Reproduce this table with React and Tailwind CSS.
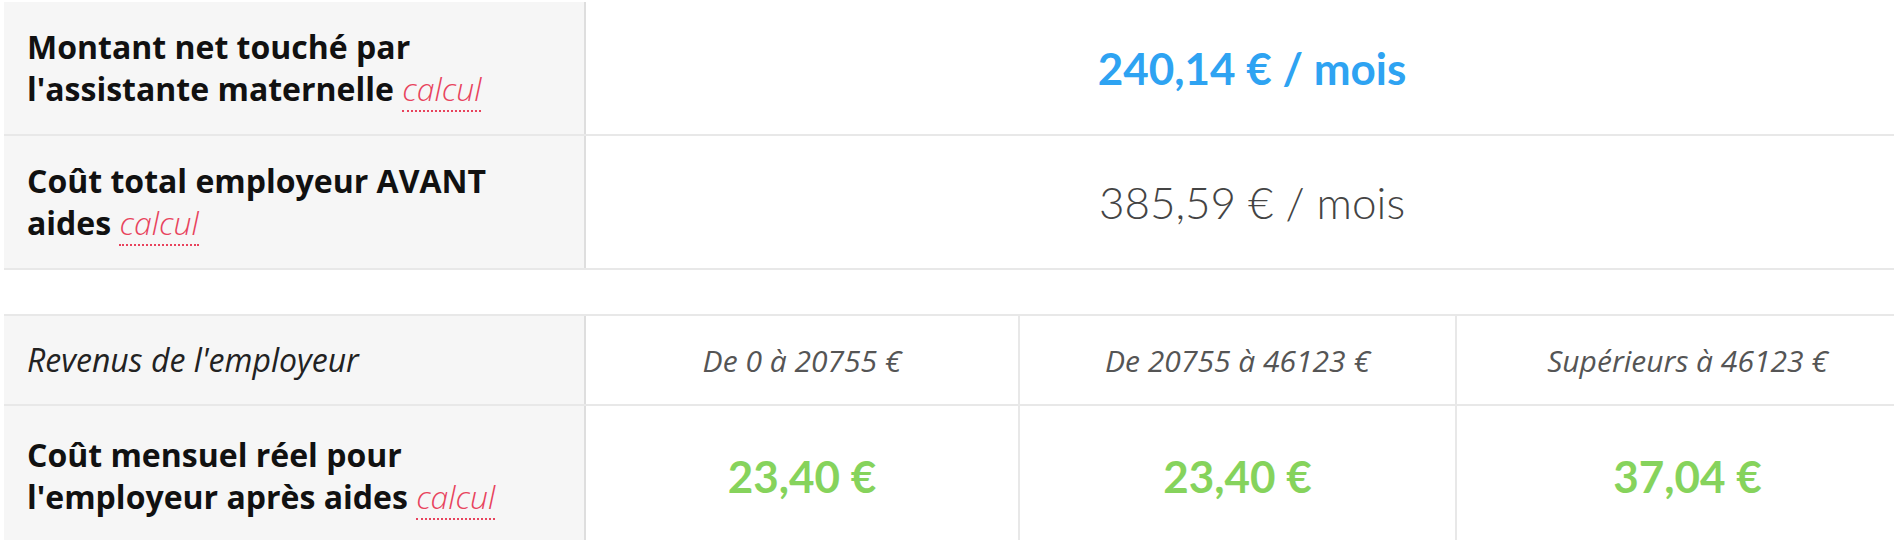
import React from "react";

function Calcul() {
  return (
    <span className="font-light italic text-[#e8435d] border-b-2 border-dotted border-[#e8435d]">
      calcul
    </span>
  );
}

function LabelCell({ children }) {
  return (
    <div className="flex flex-1 items-center bg-[#f6f6f6] border-r-2 border-[#dedede] pl-[23px] pr-[40px] font-['Open_Sans',sans-serif] font-bold text-[32px] leading-[42px] text-[#111]">
      <div>{children}</div>
    </div>
  );
}

function App() {
  return (
    <div className="w-full h-[540px] overflow-hidden bg-white">
      <div className="w-[1914px] ml-[4px] pt-[2px]">
        {/* Top table */}
        <div className="grid grid-cols-[582px_1fr]">
          <div className="h-[132px] flex">
            <LabelCell>
              Montant net touché par
              <br />
              l'assistante maternelle <Calcul />
            </LabelCell>
          </div>
          <div className="h-[132px] flex items-center justify-center font-['Lato',sans-serif] font-bold text-[44px] text-[#2ea3f2]">
            240,14 € / mois
          </div>
          <div className="col-span-2 h-[2px] bg-[#e8e8e8]"></div>
          <div className="h-[132px] flex">
            <LabelCell>
              Coût total employeur AVANT
              <br />
              aides <Calcul />
            </LabelCell>
          </div>
          <div className="h-[132px] flex items-center justify-center font-['Lato',sans-serif] font-light text-[44px] text-[#444]">
            385,59 € / mois
          </div>
          <div className="col-span-2 h-[2px] bg-[#e8e8e8]"></div>
        </div>

        {/* Aides table */}
        <div className="mt-[44px] border-t-2 border-[#e8e8e8] grid grid-cols-[582px_434px_437px_1fr]">
          <div className="h-[88px] flex">
            <div className="flex flex-1 items-center bg-[#f6f6f6] border-r-2 border-[#dedede] pl-[23px] font-['Open_Sans',sans-serif] italic text-[32px] text-[#222]">
              Revenus de l'employeur
            </div>
          </div>
          <div className="h-[88px] flex items-center justify-center border-r-2 border-[#e8e8e8] font-['Open_Sans',sans-serif] italic text-[30px] text-[#555]">
            De 0 à 20755 €
          </div>
          <div className="h-[88px] flex items-center justify-center border-r-2 border-[#e8e8e8] font-['Open_Sans',sans-serif] italic text-[30px] text-[#555]">
            De 20755 à 46123 €
          </div>
          <div className="h-[88px] flex items-center justify-center font-['Open_Sans',sans-serif] italic text-[30px] text-[#555]">
            Supérieurs à 46123 €
          </div>
          <div className="col-span-4 h-[2px] bg-[#e8e8e8]"></div>
          <div className="h-[140px] flex">
            <LabelCell>
              Coût mensuel réel pour
              <br />
              l'employeur après aides <Calcul />
            </LabelCell>
          </div>
          <div className="h-[140px] flex items-center justify-center border-r-2 border-[#e8e8e8] font-['Lato',sans-serif] font-bold text-[44px] text-[#86d35c]">
            23,40 €
          </div>
          <div className="h-[140px] flex items-center justify-center border-r-2 border-[#e8e8e8] font-['Lato',sans-serif] font-bold text-[44px] text-[#86d35c]">
            23,40 €
          </div>
          <div className="h-[140px] flex items-center justify-center font-['Lato',sans-serif] font-bold text-[44px] text-[#86d35c]">
            37,04 €
          </div>
        </div>
      </div>
    </div>
  );
}

export default App;
